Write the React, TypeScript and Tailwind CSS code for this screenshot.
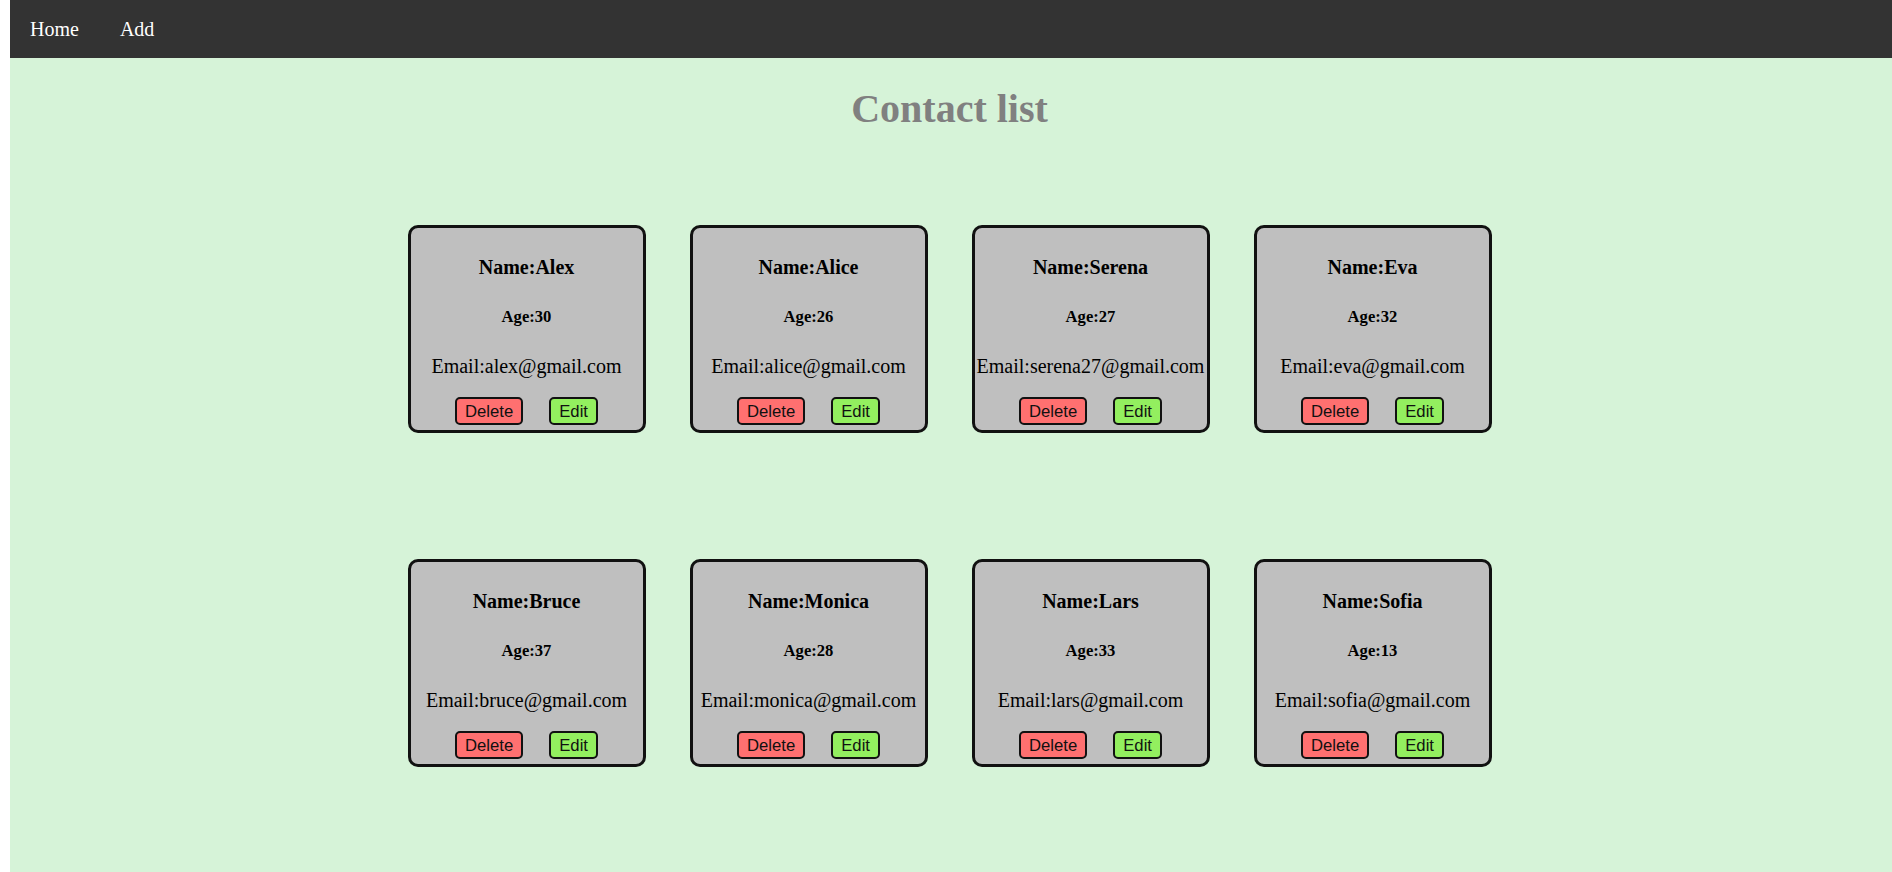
import React from "react";

type Contact = { name: string; age: number; email: string };

const contacts: Contact[] = [
  { name: "Alex", age: 30, email: "alex@gmail.com" },
  { name: "Alice", age: 26, email: "alice@gmail.com" },
  { name: "Serena", age: 27, email: "serena27@gmail.com" },
  { name: "Eva", age: 32, email: "eva@gmail.com" },
  { name: "Bruce", age: 37, email: "bruce@gmail.com" },
  { name: "Monica", age: 28, email: "monica@gmail.com" },
  { name: "Lars", age: 33, email: "lars@gmail.com" },
  { name: "Sofia", age: 13, email: "sofia@gmail.com" },
];

const ContactCard = ({ contact }: { contact: Contact }) => {
  return (
    <div className="w-[238px] h-[208px] bg-[#bfbfbf] border-[3px] border-[#111] rounded-[10px] flex flex-col items-center text-black">
      <h4 className="mt-[28px] text-[20px] leading-[23px] font-bold whitespace-nowrap">
        Name:{contact.name}
      </h4>
      <h5 className="mt-[28px] text-[16.6px] leading-[19px] font-bold whitespace-nowrap">
        Age:{contact.age}
      </h5>
      <p className="mt-[29px] text-[20px] leading-[23px] whitespace-nowrap">
        Email:{contact.email}
      </p>
      <div className="mt-[19px] flex gap-[26px] font-['Liberation_Sans',Arial,sans-serif]">
        <button className="h-[28px] px-[8px] bg-[#ff7070] border-2 border-[#111] rounded-[5px] text-[16.7px] leading-[19px] text-[#111]">
          Delete
        </button>
        <button className="h-[28px] px-[8px] bg-[#93ef5f] border-2 border-[#111] rounded-[5px] text-[16.7px] leading-[19px] text-[#111]">
          Edit
        </button>
      </div>
    </div>
  );
};

export default function App() {
  return (
    <div className="min-h-screen bg-white pl-[10px] flex font-['Liberation_Serif','Times_New_Roman',serif]">
      <div className="flex-1 min-h-screen bg-[#d6f3d8] flex flex-col">
        <nav className="h-[58px] bg-[#333333] flex items-center pl-[20px] gap-[41px] text-white text-[20px]">
          <a href="#" className="leading-[23px]">Home</a>
          <a href="#" className="leading-[23px]">Add</a>
        </nav>
        <div className="pr-[3px] flex flex-col">
          <h1 className="mt-[28px] text-center text-[40px] leading-[46px] font-bold text-[#808080]">
            Contact list
          </h1>
          <div className="mt-[93px] flex justify-center">
            <div className="grid grid-cols-4 gap-x-[44px] gap-y-[126px]">
              {contacts.map((c) => (
                <ContactCard key={c.name} contact={c} />
              ))}
            </div>
          </div>
        </div>
      </div>
    </div>
  );
}
